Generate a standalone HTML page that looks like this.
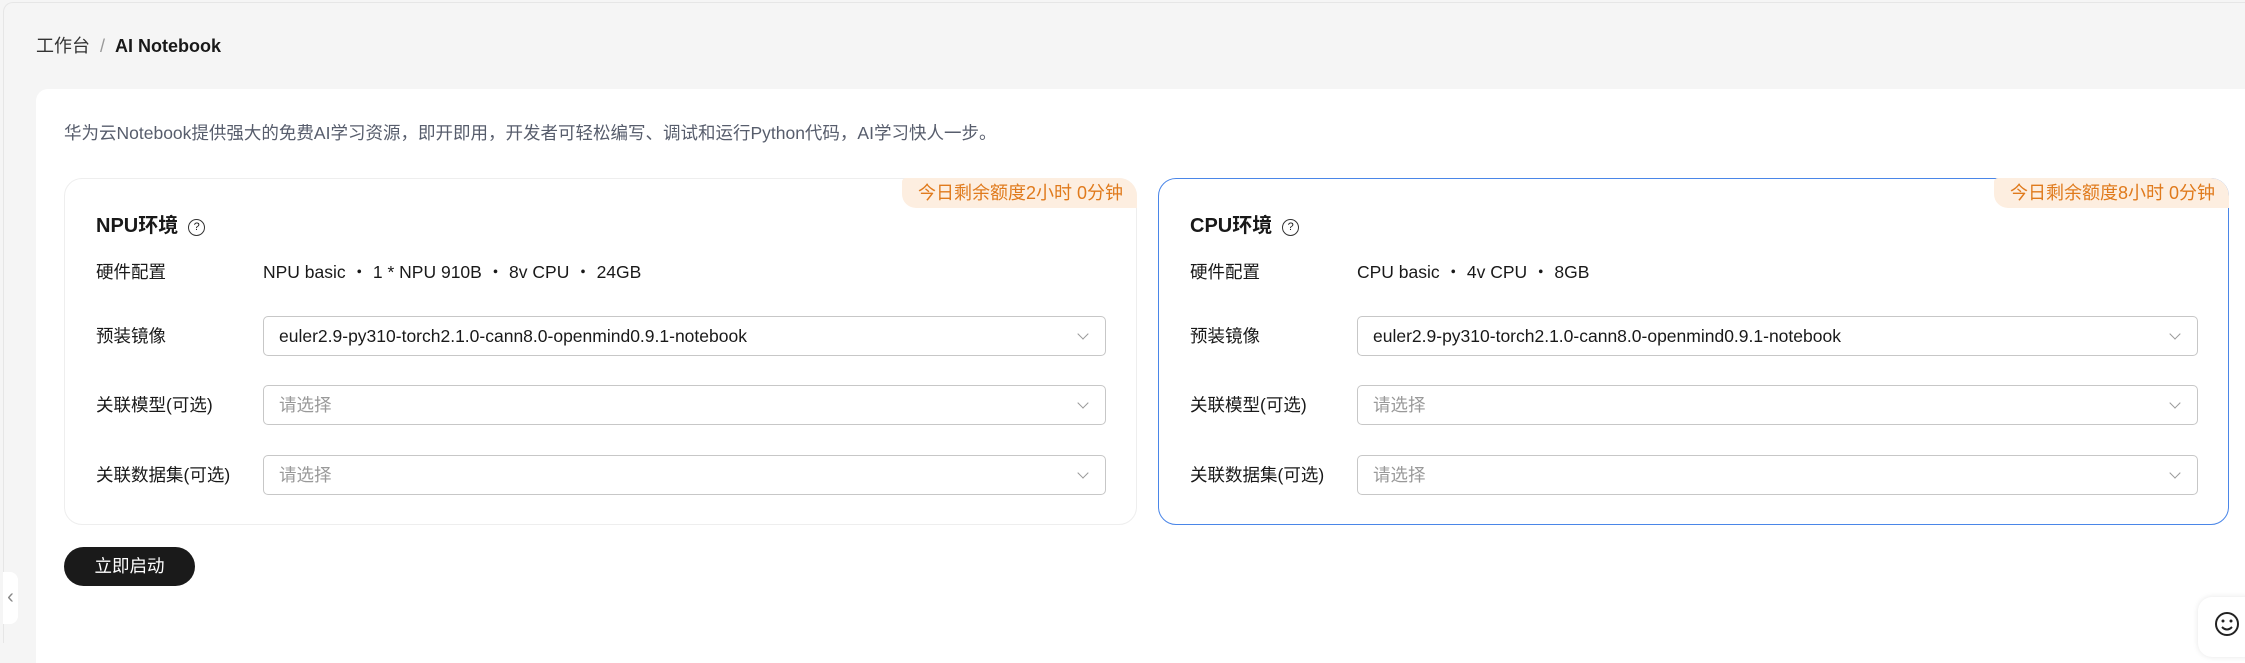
<!DOCTYPE html>
<html><head><meta charset="utf-8"><style>
*{box-sizing:border-box;margin:0;padding:0}
body{width:2245px;height:643px;background:#f5f5f5;font-family:"Liberation Sans","Noto Sans CJK SC",sans-serif;color:#191919;position:relative;overflow:hidden}
.frame{position:absolute;left:3px;top:2px;right:0;bottom:0;border-top:1px solid #e6e6e6;border-left:1px solid #e6e6e6;border-top-left-radius:10px;background:#f5f5f5}
.bc{position:absolute;left:36px;top:32px;font-size:18px;color:#333}
.bc .s{color:#999;margin:0 10px}
.bc b{color:#191919}
.main{position:absolute;left:36px;top:89px;right:0;bottom:-20px;background:#fff;border-top-left-radius:12px}
.desc{position:absolute;left:64px;top:120px;font-size:17.5px;color:#575d6c}
.card{position:absolute;top:178px;height:347px;border:1px solid #eeeeee;border-radius:18px;background:#fff}
.card.cpu{border:1.5px solid #4a86e8}
.badge{position:absolute;right:-1px;top:-1px;height:30px;padding:0 14px 0 16px;background:#fdeee0;color:#e07a1c;font-size:18px;line-height:30px;border-radius:4px 18px 0 14px}
.title{position:absolute;left:31px;top:30px;font-size:20px;font-weight:bold;color:#191919}
.q{display:inline-block;width:17px;height:17px;border:1.5px solid #333;border-radius:50%;font-size:11px;line-height:14px;text-align:center;font-weight:normal;vertical-align:2px;margin-left:10px}
.lab{position:absolute;left:31px;font-size:17.5px;color:#191919}
.val{position:absolute;left:198px;font-size:17.5px;color:#191919}
.sel{position:absolute;left:198px;right:30px;height:40px;border:1px solid #c7c7c7;border-radius:5px;font-size:17.5px;line-height:38px;padding-left:15px;color:#191919}
.sel.ph{color:#999}
.sel:after{content:"";position:absolute;right:18px;top:13px;width:7px;height:7px;border-right:1.3px solid #999;border-bottom:1.3px solid #999;transform:rotate(45deg)}
.btn{position:absolute;left:64px;top:547px;width:131px;height:39px;border-radius:20px;background:#1a1a1a;color:#fff;font-size:17.5px;line-height:39px;text-align:center}
.tab{position:absolute;left:3px;top:572px;width:15px;height:52px;background:#fff;border-radius:0 8px 8px 0;color:#888;font-size:20px;line-height:50px;text-align:center}
.smile{position:absolute;left:2198px;top:597px;width:60px;height:60px;background:#fff;border-radius:14px;box-shadow:0 0 6px rgba(0,0,0,.1)}
</style></head><body>
<div class="frame"></div>
<div class="bc">工作台<span class="s">/</span><b>AI Notebook</b></div>
<div class="main"></div>
<div class="desc">华为云Notebook提供强大的免费AI学习资源，即开即用，开发者可轻松编写、调试和运行Python代码，AI学习快人一步。</div>

<div class="card" style="left:64px;width:1073px">
<div class="badge">今日剩余额度2小时 0分钟</div>
<div class="title">NPU环境<span class="q">?</span></div>
<div class="lab" style="top:80px">硬件配置</div>
<div class="val" style="top:80px">NPU basic ・ 1 * NPU 910B ・ 8v CPU ・ 24GB</div>
<div class="lab" style="top:144px">预装镜像</div>
<div class="sel" style="top:137px">euler2.9-py310-torch2.1.0-cann8.0-openmind0.9.1-notebook</div>
<div class="lab" style="top:213px">关联模型(可选)</div>
<div class="sel ph" style="top:206px">请选择</div>
<div class="lab" style="top:283px">关联数据集(可选)</div>
<div class="sel ph" style="top:276px">请选择</div>
</div>

<div class="card cpu" style="left:1158px;width:1071px">
<div class="badge">今日剩余额度8小时 0分钟</div>
<div class="title">CPU环境<span class="q">?</span></div>
<div class="lab" style="top:80px">硬件配置</div>
<div class="val" style="top:80px">CPU basic ・ 4v CPU ・ 8GB</div>
<div class="lab" style="top:144px">预装镜像</div>
<div class="sel" style="top:137px">euler2.9-py310-torch2.1.0-cann8.0-openmind0.9.1-notebook</div>
<div class="lab" style="top:213px">关联模型(可选)</div>
<div class="sel ph" style="top:206px">请选择</div>
<div class="lab" style="top:283px">关联数据集(可选)</div>
<div class="sel ph" style="top:276px">请选择</div>
</div>

<div class="btn">立即启动</div>
<div class="tab">‹</div>
<div class="smile"><svg width="30" height="30" viewBox="0 0 30 30" style="position:absolute;left:14px;top:12px"><circle cx="15" cy="15" r="11" fill="none" stroke="#222" stroke-width="2"/><circle cx="11" cy="12" r="1.5" fill="#222"/><circle cx="19" cy="12" r="1.5" fill="#222"/><path d="M10 18 Q15 23 20 18" fill="none" stroke="#222" stroke-width="2"/></svg></div>
</body></html>
